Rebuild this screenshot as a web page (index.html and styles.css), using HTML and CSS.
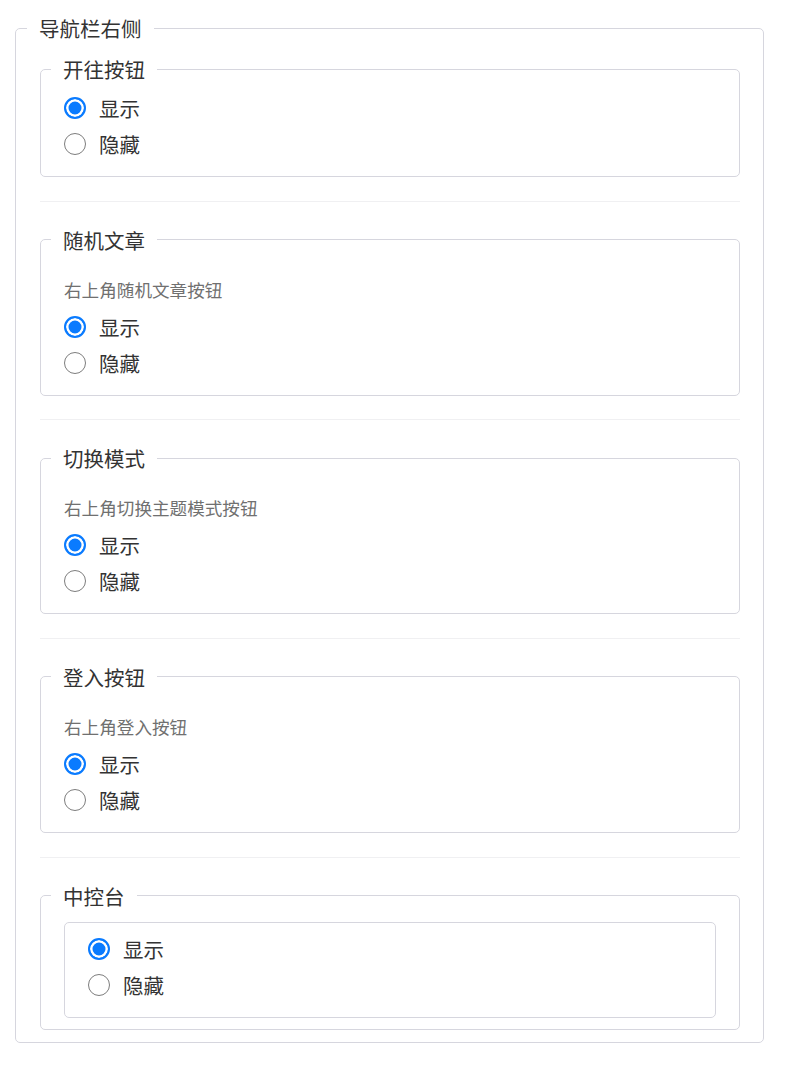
FILE: index.html
```html
<!DOCTYPE html>
<html lang="zh-CN">
<head>
<meta charset="utf-8">
<title>导航栏右侧</title>
<link rel="stylesheet" href="styles.css">
</head>
<body>
<fieldset class="group">
  <legend class="legend">导航栏右侧</legend>

  <fieldset class="sub">
    <legend class="legend">开往按钮</legend>
    <label class="opt"><input type="radio" class="radio" name="kaiwang" checked><span>显示</span></label>
    <label class="opt"><input type="radio" class="radio" name="kaiwang"><span>隐藏</span></label>
  </fieldset>
  <div class="sep"></div>

  <fieldset class="sub">
    <legend class="legend">随机文章</legend>
    <p class="desc">右上角随机文章按钮</p>
    <label class="opt"><input type="radio" class="radio" name="random" checked><span>显示</span></label>
    <label class="opt"><input type="radio" class="radio" name="random"><span>隐藏</span></label>
  </fieldset>
  <div class="sep"></div>

  <fieldset class="sub">
    <legend class="legend">切换模式</legend>
    <p class="desc">右上角切换主题模式按钮</p>
    <label class="opt"><input type="radio" class="radio" name="mode" checked><span>显示</span></label>
    <label class="opt"><input type="radio" class="radio" name="mode"><span>隐藏</span></label>
  </fieldset>
  <div class="sep"></div>

  <fieldset class="sub">
    <legend class="legend">登入按钮</legend>
    <p class="desc">右上角登入按钮</p>
    <label class="opt"><input type="radio" class="radio" name="login" checked><span>显示</span></label>
    <label class="opt"><input type="radio" class="radio" name="login"><span>隐藏</span></label>
  </fieldset>
  <div class="sep"></div>

  <fieldset class="sub sub-boxed">
    <legend class="legend">中控台</legend>
    <div class="box">
      <label class="opt"><input type="radio" class="radio" name="console" checked><span>显示</span></label>
      <label class="opt"><input type="radio" class="radio" name="console"><span>隐藏</span></label>
    </div>
  </fieldset>
</fieldset>
</body>
</html>
```

FILE: styles.css
```css
html, body {
  margin: 0;
  padding: 0;
  background: #ffffff;
}

body {
  font-family: "Noto Sans CJK SC", "Noto Sans", sans-serif;
  color: #333333;
}

.group {
  box-sizing: border-box;
  width: 749px;
  margin: 13px 0 0 15px;
  padding: 11px 23px 12px 24px;
  border: 1px solid #d6d6de;
  border-radius: 5px;
  min-width: 0;
}

.legend {
  padding: 0 12px;
  margin-left: -13px;
  font-size: 20.5px;
  line-height: 30px;
  color: #333333;
}

.sub {
  box-sizing: border-box;
  width: 100%;
  margin: 0;
  padding: 6px 23px 14px 23px;
  border: 1px solid #d6d6de;
  border-radius: 5px;
  min-width: 0;
}

.sub-boxed {
  padding: 11px 23px 11px 23px;
}

.box {
  border: 1px solid #d6d6de;
  border-radius: 5px;
  padding: 8px 23px 14px 23px;
}

.sep {
  height: 1px;
  background: #f0f0f2;
  margin: 23.67px 0 23px;
}

.desc {
  margin: 16px 0 6px;
  font-size: 17.6px;
  line-height: 26px;
  color: #707070;
}

.opt {
  display: flex;
  align-items: center;
  height: 36px;
  font-size: 20.5px;
  line-height: 30px;
  color: #333333;
  cursor: pointer;
}

.radio {
  -webkit-appearance: none;
  appearance: none;
  box-sizing: border-box;
  width: 22px;
  height: 22px;
  margin: 0 13px 0 0;
  border: 1.5px solid #7d7d7d;
  border-radius: 50%;
  background: #ffffff;
  flex: none;
}

.radio:checked {
  border: 2px solid #0a7bff;
  background: #0a7bff;
  box-shadow: inset 0 0 0 2.5px #ffffff;
}
```
